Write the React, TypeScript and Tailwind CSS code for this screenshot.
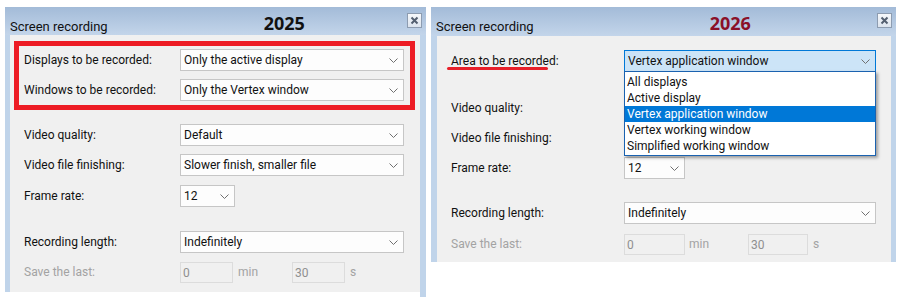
import React from 'react';

const ui = "font-['Roboto','Liberation_Sans',sans-serif] text-[12px]";

function Chevron() {
  return (
    <svg width="9" height="5" viewBox="0 0 9 5" className="shrink-0">
      <path d="M0.5 0.5 L4.5 4.5 L8.5 0.5" fill="none" stroke="#707070" strokeWidth="1" />
    </svg>
  );
}

function CloseBox() {
  return (
    <div className="mt-[6px] flex h-[15px] w-[15px] items-center justify-center border border-[#8d9cb0] bg-gradient-to-b from-[#f6f8fb] to-[#dce4ee]">
      <svg width="9" height="9" viewBox="0 0 9 9">
        <path d="M1.5 1.5 L7.5 7.5 M7.5 1.5 L1.5 7.5" stroke="#535f70" strokeWidth="2" />
      </svg>
    </div>
  );
}

function Select({ value, width, active = false }: { value: string; width: string; active?: boolean }) {
  return (
    <div
      className={`flex h-[22px] ${width} items-center justify-between border pl-[3px] pr-[5px] ${
        active ? 'border-[#0078d7] bg-[#cce4f7]' : 'border-[#c6c6c6] bg-[#fdfdfd]'
      }`}
    >
      <span className="text-[#111]">{value}</span>
      <Chevron />
    </div>
  );
}

function TitleBar({ year, yearColor, yearPos, height }: { year: string; yearColor: string; yearPos: string; height: string }) {
  return (
    <div className={`flex ${height} items-start bg-gradient-to-b from-[#a3bbd8] to-[#c3d5ea]`}>
      <span className={`${ui} mt-[10px] ml-[5px] text-[13px] text-[#111]`}>Screen recording</span>
      <span className={`font-['Noto_Sans',sans-serif] text-[18px] font-bold leading-none mt-[7px] ${yearPos} ${yearColor}`}>{year}</span>
      <div className="ml-auto mr-[4px]">
        <CloseBox />
      </div>
    </div>
  );
}

function Row({ label, children, labelW, mt, disabled = false }: { label: string; children: React.ReactNode; labelW: string; mt: string; disabled?: boolean }) {
  return (
    <div className={`flex h-[22px] items-center ${mt}`}>
      <span className={`${labelW} shrink-0 ${disabled ? 'text-[#a3a3a3]' : 'text-[#111]'}`}>{label}</span>
      {children}
    </div>
  );
}

function DisabledInput({ value, width }: { value: string; width: string }) {
  return (
    <div className={`flex h-[21px] ${width} items-start border border-[#dcdcdc] bg-[#f0f0f0] pl-[2px] pt-[1px] text-[#8f8f8f]`}>
      {value}
    </div>
  );
}

const areaOptions = [
  'All displays',
  'Active display',
  'Vertex application window',
  'Vertex working window',
  'Simplified working window',
];

export default function App() {
  return (
    <div className={`${ui} flex h-[297px] w-[900px] items-start gap-[5px] bg-white pl-[5px] pt-[7px]`}>
      {/* 2025 dialog */}
      <div className="flex h-[290px] w-[421px] flex-col">
        <TitleBar year="2025" yearColor="text-[#111]" yearPos="ml-[156px]" height="h-[28px]" />
        <div className="flex h-[257px] bg-[#c0d4ea] pl-[5px] pr-[6px]">
          <div className="flex-1 bg-[#f0f0f0] pl-[4px] pt-[6px]">
            <div className="w-[401px] border-[5px] border-[#ed1c24] pb-[4px] pl-[5px] pt-[3px]">
              <Row label="Displays to be recorded:" labelW="w-[156px]" mt="">
                <Select value="Only the active display" width="w-[224px]" />
              </Row>
              <Row label="Windows to be recorded:" labelW="w-[156px]" mt="mt-[8px]">
                <Select value="Only the Vertex window" width="w-[224px]" />
              </Row>
            </div>
            <div className="pl-[10px]">
              <Row label="Video quality:" labelW="w-[156px]" mt="mt-[14px]">
                <Select value="Default" width="w-[224px]" />
              </Row>
              <Row label="Video file finishing:" labelW="w-[156px]" mt="mt-[8px]">
                <Select value="Slower finish, smaller file" width="w-[224px]" />
              </Row>
              <Row label="Frame rate:" labelW="w-[156px]" mt="mt-[9px]">
                <Select value="12" width="w-[55px]" />
              </Row>
              <Row label="Recording length:" labelW="w-[156px]" mt="mt-[24px]">
                <Select value="Indefinitely" width="w-[224px]" />
              </Row>
              <Row label="Save the last:" labelW="w-[156px]" mt="mt-[8px]" disabled>
                <DisabledInput value="0" width="w-[53px]" />
                <span className="ml-[5px] w-[54px] text-[#a3a3a3]">min</span>
                <DisabledInput value="30" width="w-[53px]" />
                <span className="ml-[5px] text-[#a3a3a3]">s</span>
              </Row>
            </div>
          </div>
        </div>
        <div className="flex h-[5px]">
          <div className="flex-1 bg-white" />
          <div className="w-[6px] bg-[#c0d4ea]" />
        </div>
      </div>

      {/* 2026 dialog */}
      <div className="flex h-[255px] w-[465px] flex-col">
        <TitleBar year="2026" yearColor="text-[#8a1028]" yearPos="ml-[176px]" height="h-[29px]" />
        <div className="flex flex-1 bg-[#c0d4ea] pl-[6px] pr-[5px]">
          <div className="flex-1 bg-[#f0f0f0] pl-[14px] pt-[14px]">
            <div className="flex h-[22px] items-center">
              <span className="relative w-[173px] shrink-0 text-[#111]">
                Area to be recorded:
                <span className="absolute left-[-4px] top-[15px] h-[3px] w-[101px] rounded-full bg-[#e8202a]" />
              </span>
              <div className="relative">
                <Select value="Vertex application window" width="w-[252px]" active />
                <div className="absolute left-0 top-[21px] z-10 w-[252px] border border-[#1a62b0] bg-white pb-[1px] pt-[2px] shadow-[2px_2px_3px_rgba(0,0,0,0.35)]">
                  {areaOptions.map((opt) => (
                    <div
                      key={opt}
                      className={`flex h-[16px] items-center pl-[2px] ${
                        opt === 'Vertex application window' ? 'bg-[#0078d7] text-white' : 'text-[#111]'
                      }`}
                    >
                      {opt}
                    </div>
                  ))}
                </div>
              </div>
            </div>
            {/* these two selects sit under the open list, so their values are not visible */}
            <Row label="Video quality:" labelW="w-[173px]" mt="mt-[25px]">
              <Select value="" width="w-[252px]" />
            </Row>
            <Row label="Video file finishing:" labelW="w-[173px]" mt="mt-[8px]">
              <Select value="" width="w-[252px]" />
            </Row>
            <Row label="Frame rate:" labelW="w-[173px]" mt="mt-[8px]">
              <Select value="12" width="w-[61px]" />
            </Row>
            <Row label="Recording length:" labelW="w-[173px]" mt="mt-[23px]">
              <Select value="Indefinitely" width="w-[252px]" />
            </Row>
            <Row label="Save the last:" labelW="w-[173px]" mt="mt-[9px]" disabled>
              <DisabledInput value="0" width="w-[61px]" />
              <span className="ml-[4px] w-[59px] text-[#a3a3a3]">min</span>
              <DisabledInput value="30" width="w-[60px]" />
              <span className="ml-[5px] text-[#a3a3a3]">s</span>
            </Row>
          </div>
        </div>
      </div>
    </div>
  );
}
